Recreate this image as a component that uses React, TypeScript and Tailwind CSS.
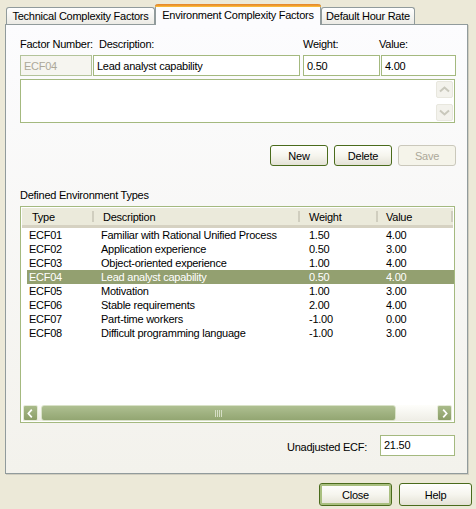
import React from 'react';

// 行データ
const ROWS = [
  { type: 'ECF01', desc: 'Familiar with Rational Unified Process', weight: '1.50', value: '4.00' },
  { type: 'ECF02', desc: 'Application experience', weight: '0.50', value: '3.00' },
  { type: 'ECF03', desc: 'Object-oriented experience', weight: '1.00', value: '4.00' },
  { type: 'ECF04', desc: 'Lead analyst capability', weight: '0.50', value: '4.00' },
  { type: 'ECF05', desc: 'Motivation', weight: '1.00', value: '3.00' },
  { type: 'ECF06', desc: 'Stable requirements', weight: '2.00', value: '4.00' },
  { type: 'ECF07', desc: 'Part-time workers', weight: '-1.00', value: '0.00' },
  { type: 'ECF08', desc: 'Difficult programming language', weight: '-1.00', value: '3.00' },
];

const SELECTED = 'ECF04';

const Chevron: React.FC<{ dir: 'left' | 'right' | 'up' | 'down'; color: string }> = ({ dir, color }) => {
  const d = {
    left: 'M9 3 L5 7.5 L9 12',
    right: 'M6 3 L10 7.5 L6 12',
    up: 'M3 9.5 L7.5 5.5 L12 9.5',
    down: 'M3 5.5 L7.5 9.5 L12 5.5',
  }[dir];
  return (
    <svg width="15" height="15" viewBox="0 0 15 15">
      <path d={d} fill="none" stroke={color} strokeWidth="2" />
    </svg>
  );
};

const Tab: React.FC<{ label: string; active?: boolean; width: string }> = ({ label, active, width }) => {
  if (active) {
    return (
      <div className={`${width} h-[21px] -mb-px relative z-10 flex flex-col border-x border-[#919B9C] rounded-t-[3px] bg-[#FCFCFE]`}>
        <div className="h-[3px] -mx-px rounded-t-[3px] bg-gradient-to-b from-[#E68B2C] to-[#FFC73C] border-t border-[#E68B2C]" />
        <div className="flex-1 flex items-center justify-center pb-[3px]">{label}</div>
      </div>
    );
  }
  return (
    <div className={`${width} h-[17px] flex items-center justify-center border border-b-0 border-[#919B9C] rounded-t-[3px] bg-gradient-to-b from-[#FFFFFF] to-[#ECEBE5]`}>
      {label}
    </div>
  );
};

const XpButton: React.FC<{ label: string; disabled?: boolean; isDefault?: boolean; className?: string }> = ({
  label,
  disabled,
  isDefault,
  className = '',
}) => (
  <button
    className={`h-[21px] rounded-[3px] border flex items-center justify-center ${
      disabled
        ? 'border-[#CAC8BB] bg-[#F5F4EA] text-[#ACA899]'
        : 'border-[#4A6B1C] bg-gradient-to-b from-[#FFFFFE] via-[#F6F5EE] to-[#E4E2D6] text-black'
    } ${isDefault ? 'shadow-[inset_0_0_0_2px_#A9BF7F]' : ''} ${className}`}
  >
    {label}
  </button>
);

const App: React.FC = () => {
  return (
    <div className="w-[476px] h-[509px] bg-[#ECE9D8] text-black text-[11px] leading-[14px] tracking-[-0.25px] font-['Liberation_Sans',Arial,sans-serif] overflow-hidden">
      {/* タブ */}
      <div className="flex items-end pl-[6px] pt-[4px] h-[24px]">
        <Tab label="Technical Complexity Factors" width="w-[149px]" />
        <Tab label="Environment Complexity Factors" width="w-[166px]" active />
        <Tab label="Default Hour Rate" width="w-[94px]" />
      </div>

      {/* パネル */}
      <div className="ml-[5px] w-[463px] h-[450px] border border-[#919B9C] shadow-[1px_1px_0_#D0CDBF] bg-gradient-to-b from-[#FCFCFE] to-[#F3F2EC] pl-[14px] pr-[11px]">
        <div className="flex mt-[12px] h-[14px]">
          <div className="w-[79px]">Factor Number:</div>
          <div className="w-[204px]">Description:</div>
          <div className="w-[76px]">Weight:</div>
          <div>Value:</div>
        </div>

        <div className="flex mt-[4px] h-[21px]">
          <div className="w-[72px] border border-[#B3C39A] bg-[#F6F5F0] text-[#ACA899] px-[3px] flex items-center">ECF04</div>
          <div className="w-[207px] ml-[1px] border border-[#A4B97F] bg-white px-[3px] flex items-center">Lead analyst capability</div>
          <div className="w-[77px] ml-[3px] border border-[#A4B97F] bg-white px-[3px] flex items-center">0.50</div>
          <div className="w-[75px] ml-[1px] border border-[#A4B97F] bg-white px-[3px] flex items-center">4.00</div>
        </div>

        {/* ノート */}
        <div className="mt-[3px] h-[44px] w-[435px] border border-[#A4B97F] bg-white flex justify-end p-[1px]">
          <div className="w-[17px] flex flex-col justify-between">
            <div className="h-[17px] rounded-[2px] border border-[#E8E7DE] bg-[#F3F2EC] flex items-center justify-center">
              <Chevron dir="up" color="#C9C8BC" />
            </div>
            <div className="h-[17px] rounded-[2px] border border-[#E8E7DE] bg-[#F3F2EC] flex items-center justify-center">
              <Chevron dir="down" color="#C9C8BC" />
            </div>
          </div>
        </div>

        {/* ボタン */}
        <div className="flex mt-[22px] pl-[250px] gap-[6px]">
          <XpButton label="New" className="w-[58px]" />
          <XpButton label="Delete" className="w-[58px]" />
          <XpButton label="Save" className="w-[58px]" disabled />
        </div>

        <div className="mt-[22px] h-[14px]">Defined Environment Types</div>

        {/* 一覧 */}
        <div className="mt-[4px] w-[435px] h-[217px] border border-[#A4B97F] bg-white p-[1px] flex flex-col">
          <div className="h-[20px] flex items-stretch bg-[#EBEADB] border-b-[3px] border-[#D6D2C2]">
            <div className="w-[72px] pl-[10px] flex items-center border-r-2 border-[#D0CEBF] my-[3px]">Type</div>
            <div className="w-[206px] pl-[9px] flex items-center border-r-2 border-[#D0CEBF] my-[3px]">Description</div>
            <div className="w-[78px] pl-[9px] flex items-center border-r-2 border-[#D0CEBF] my-[3px]">Weight</div>
            <div className="w-[75px] pl-[8px] flex items-center border-r-2 border-[#D0CEBF] my-[3px]">Value</div>
          </div>
          <div className="flex-1">
            {ROWS.map((r) => (
              <div
                key={r.type}
                className={`h-[14px] flex items-center ml-[5px] w-[427px] ${
                  r.type === SELECTED ? 'bg-[#93A070] text-white' : ''
                }`}
              >
                <div className="w-[74px] pl-[2px]">{r.type}</div>
                <div className="w-[208px]">{r.desc}</div>
                <div className="w-[77px]">{r.weight}</div>
                <div>{r.value}</div>
              </div>
            ))}
          </div>
          {/* 横スクロール */}
          <div className="h-[16px] flex items-stretch bg-gradient-to-b from-[#FEFEFB] to-[#EEEDE5] mx-px">
            <div className="w-[15px] rounded-[2px] border border-[#E6EBD9] bg-gradient-to-b from-[#A9BB8A] to-[#8C9E68] flex items-center justify-center">
              <Chevron dir="left" color="#FFFFFF" />
            </div>
            <div className="w-[355px] ml-[3px] rounded-[3px] border border-[#D9E2C8] bg-gradient-to-b from-[#AFC092] via-[#A0B281] to-[#93A672] flex items-center justify-center">
              <div className="flex gap-[1px]">
                <div className="w-px h-[7px] bg-[#D6DEC6]" />
                <div className="w-px h-[7px] bg-[#D6DEC6]" />
                <div className="w-px h-[7px] bg-[#D6DEC6]" />
                <div className="w-px h-[7px] bg-[#D6DEC6]" />
              </div>
            </div>
            <div className="flex-1" />
            <div className="w-[15px] rounded-[2px] border border-[#E6EBD9] bg-gradient-to-b from-[#A9BB8A] to-[#8C9E68] flex items-center justify-center">
              <Chevron dir="right" color="#FFFFFF" />
            </div>
          </div>
        </div>

        <div className="flex justify-end items-center mt-[12px] w-[435px]">
          <div className="mr-[13px] mt-[3px]">Unadjusted ECF:</div>
          <div className="w-[75px] h-[21px] border border-[#A4B97F] bg-white px-[3px] pt-[2px]">21.50</div>
        </div>
      </div>

      {/* フッター */}
      <div className="flex justify-end gap-[7px] pr-[4px] mt-[9px]">
        <XpButton label="Close" className="w-[73px] h-[23px]" isDefault />
        <XpButton label="Help" className="w-[73px] h-[23px]" />
      </div>
    </div>
  );
};

export default App;
